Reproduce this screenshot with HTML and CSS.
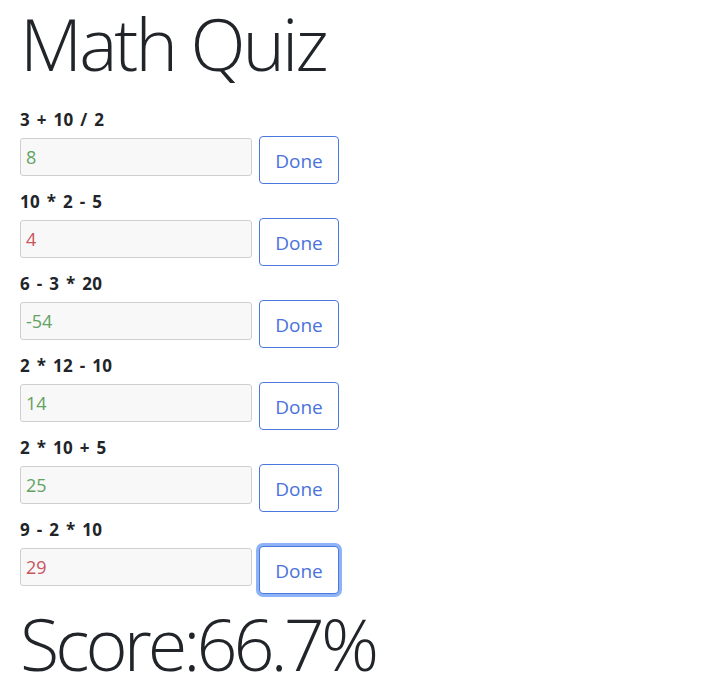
FILE: index.html
```html
<!DOCTYPE html>
<html>
<head>
<meta charset="utf-8">
<title>Math Quiz</title>
<link rel="stylesheet" href="styles.css">
</head>
<body>
<div class="quiz">
  <h1 class="title">Math Quiz</h1>
  <div class="question">
    <label class="q-label">3 + 10 / 2</label>
    <div class="q-row"><input class="answer correct" value="8"><button class="done">Done</button></div>
  </div>
  <div class="question">
    <label class="q-label">10 * 2 - 5</label>
    <div class="q-row"><input class="answer wrong" value="4"><button class="done">Done</button></div>
  </div>
  <div class="question">
    <label class="q-label">6 - 3 * 20</label>
    <div class="q-row"><input class="answer correct" value="-54"><button class="done">Done</button></div>
  </div>
  <div class="question">
    <label class="q-label">2 * 12 - 10</label>
    <div class="q-row"><input class="answer correct" value="14"><button class="done">Done</button></div>
  </div>
  <div class="question">
    <label class="q-label">2 * 10 + 5</label>
    <div class="q-row"><input class="answer correct" value="25"><button class="done">Done</button></div>
  </div>
  <div class="question">
    <label class="q-label">9 - 2 * 10</label>
    <div class="q-row"><input class="answer wrong" value="29"><button class="done focused">Done</button></div>
  </div>
  <div class="score">Score:66.7%</div>
</div>
</body>
</html>
```
FILE: styles.css
```css
html, body {
  margin: 0;
  padding: 0;
  background: #ffffff;
}
body {
  font-family: "Open Sans", "Noto Sans", sans-serif;
  color: #212529;
}
.quiz {
  padding: 0 20px;
}
.title {
  margin: 0 0 22px 0;
  font-family: "Open Sans", sans-serif;
  font-size: 72px;
  font-weight: 300;
  line-height: 86px;
  letter-spacing: -3px;
}
.question {
  display: flex;
  flex-direction: column;
  margin-bottom: 6px;
}
.q-label {
  font-size: 17px;
  font-weight: 700;
  line-height: 24px;
  margin-bottom: 4px;
  word-spacing: 2px;
  letter-spacing: 0.3px;
}
.q-row {
  display: flex;
  align-items: flex-start;
  gap: 7px;
}
.answer {
  box-sizing: border-box;
  width: 232px;
  height: 38px;
  margin-top: 2px;
  padding: 0 5px;
  border: 1px solid #cfcfcf;
  border-radius: 3px;
  background: #f8f8f8;
  font-family: "Open Sans", "Noto Sans", sans-serif;
  font-size: 18px;
  font-weight: 400;
  outline: none;
}
.answer.correct { color: #62a262; }
.answer.wrong { color: #c9545b; }
.done {
  box-sizing: border-box;
  width: 80px;
  height: 48px;
  padding: 0;
  border: 1px solid #4a78dc;
  border-radius: 4px;
  background: #ffffff;
  color: #4a72dc;
  font-family: "Open Sans", "Noto Sans", sans-serif;
  font-size: 19px;
  padding-top: 2px;
}
.done.focused {
  box-shadow: 0 0 0 3px #8db3f6;
}
.score {
  margin-top: 4px;
  font-size: 72px;
  font-weight: 300;
  line-height: 86px;
  letter-spacing: -4px;
}
```
